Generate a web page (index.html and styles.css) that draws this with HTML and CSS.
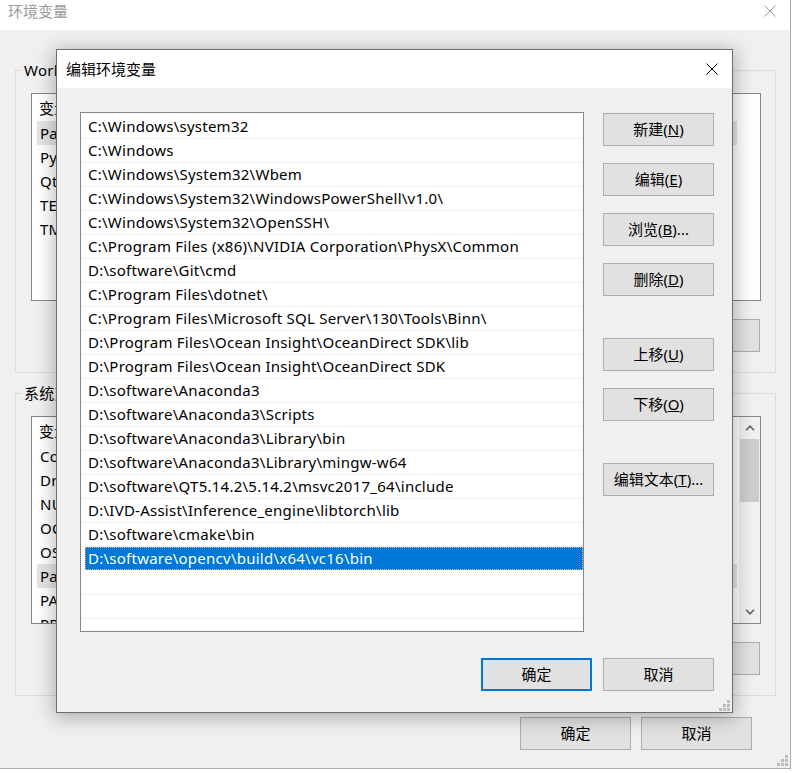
FILE: index.html
```html
<!DOCTYPE html>
<html lang="zh-CN">
<head>
<meta charset="utf-8">
<title>编辑环境变量</title>
<link rel="stylesheet" href="styles.css">
</head>
<body>
<div class="bgwin">
  <div class="bg-title">
    <span class="bg-title-text">环境变量</span>
    <svg class="bg-close" width="12" height="12" viewBox="0 0 12 12"><path d="M0.5 0.5L11.5 11.5M11.5 0.5L0.5 11.5" stroke="#9a9a9a" stroke-width="1" fill="none"/></svg>
  </div>
  <div class="bg-content">
    <fieldset class="group">
      <legend>WorkUser 的用户变量(U)</legend>
      <div class="gbody">
        <div class="bglist">
          <div class="bgl-main">
            <div class="bgl-head"><span class="c1">变量</span><span class="c2">值</span></div>
            <div class="bgl-row sel"><span class="c1">Path</span><span class="c2">C:\Users\WorkUser\AppData\Local\Microsoft\WindowsApps</span></div>
            <div class="bgl-row"><span class="c1">PyCharm Community Edition</span><span class="c2">D:\software\PyCharm\bin;</span></div>
            <div class="bgl-row"><span class="c1">QtMsBuild</span><span class="c2">C:\Users\WorkUser\AppData\Local\QtMsBuild</span></div>
            <div class="bgl-row"><span class="c1">TEMP</span><span class="c2">%USERPROFILE%\AppData\Local\Temp</span></div>
            <div class="bgl-row"><span class="c1">TMP</span><span class="c2">%USERPROFILE%\AppData\Local\Temp</span></div>
          </div>
        </div>
        <div class="grp-btns">
          <button class="wbtn">新建(<u>N</u>)...</button>
          <button class="wbtn">编辑(<u>E</u>)...</button>
          <button class="wbtn">删除(<u>D</u>)</button>
        </div>
      </div>
    </fieldset>
    <fieldset class="group g2">
      <legend>系统变量(<u>S</u>)</legend>
      <div class="gbody">
        <div class="bglist">
          <div class="bgl-main">
            <div class="bgl-head"><span class="c1">变量</span><span class="c2">值</span></div>
            <div class="bgl-row"><span class="c1">ComSpec</span><span class="c2">C:\Windows\system32\cmd.exe</span></div>
            <div class="bgl-row"><span class="c1">DriverData</span><span class="c2">C:\Windows\System32\Drivers\DriverData</span></div>
            <div class="bgl-row"><span class="c1">NUMBER_OF_PROCESSORS</span><span class="c2">12</span></div>
            <div class="bgl-row"><span class="c1">OCL_ICD_FILENAMES</span><span class="c2">intelocl64.dll</span></div>
            <div class="bgl-row"><span class="c1">OS</span><span class="c2">Windows_NT</span></div>
            <div class="bgl-row sel"><span class="c1">Path</span><span class="c2">C:\Windows\system32;C:\Windows;</span></div>
            <div class="bgl-row"><span class="c1">PATHEXT</span><span class="c2">.COM;.EXE;.BAT;.CMD;.VBS;.VBE;.JS</span></div>
            <div class="bgl-row"><span class="c1">PROCESSOR_ARCHITECTURE</span><span class="c2">AMD64</span></div>
          </div>
          <div class="vscroll">
            <svg class="arrow" width="10" height="6" viewBox="0 0 10 6"><path d="M1 5.2L5 1.2L9 5.2" stroke="#606060" stroke-width="1.6" fill="none"/></svg>
            <div class="thumb"></div>
            <div class="track"></div>
            <svg class="arrow" width="10" height="6" viewBox="0 0 10 6"><path d="M1 0.8L5 4.8L9 0.8" stroke="#606060" stroke-width="1.6" fill="none"/></svg>
          </div>
        </div>
        <div class="grp-btns">
          <button class="wbtn">新建(<u>W</u>)...</button>
          <button class="wbtn">编辑(<u>I</u>)...</button>
          <button class="wbtn">删除(<u>L</u>)</button>
        </div>
      </div>
    </fieldset>
    <div class="bg-foot">
      <button class="wbtn">确定</button>
      <button class="wbtn">取消</button>
    </div>
  </div>
  <svg class="grip" width="12" height="12" viewBox="0 0 12 12"><g fill="#bcbcbc"><rect x="8" y="0" width="3" height="3"/><rect x="4" y="4" width="3" height="3"/><rect x="8" y="4" width="3" height="3"/><rect x="0" y="8" width="3" height="3"/><rect x="4" y="8" width="3" height="3"/><rect x="8" y="8" width="3" height="3"/></g></svg>
</div>

<div class="dlg">
  <div class="dlg-title">
    <span class="dlg-title-text">编辑环境变量</span>
    <svg class="dlg-close" width="12" height="12" viewBox="0 0 12 12"><path d="M0.5 0.5L11.5 11.5M11.5 0.5L0.5 11.5" stroke="#000" stroke-width="1" fill="none"/></svg>
  </div>
  <div class="dlg-body">
    <div class="dlg-main">
      <div class="plist">
        <div class="prow"><div class="pcell">C:\Windows\system32</div></div>
        <div class="prow"><div class="pcell">C:\Windows</div></div>
        <div class="prow"><div class="pcell">C:\Windows\System32\Wbem</div></div>
        <div class="prow"><div class="pcell">C:\Windows\System32\WindowsPowerShell\v1.0\</div></div>
        <div class="prow"><div class="pcell">C:\Windows\System32\OpenSSH\</div></div>
        <div class="prow"><div class="pcell">C:\Program Files (x86)\NVIDIA Corporation\PhysX\Common</div></div>
        <div class="prow"><div class="pcell">D:\software\Git\cmd</div></div>
        <div class="prow"><div class="pcell">C:\Program Files\dotnet\</div></div>
        <div class="prow"><div class="pcell">C:\Program Files\Microsoft SQL Server\130\Tools\Binn\</div></div>
        <div class="prow"><div class="pcell">D:\Program Files\Ocean Insight\OceanDirect SDK\lib</div></div>
        <div class="prow"><div class="pcell">D:\Program Files\Ocean Insight\OceanDirect SDK</div></div>
        <div class="prow"><div class="pcell">D:\software\Anaconda3</div></div>
        <div class="prow"><div class="pcell">D:\software\Anaconda3\Scripts</div></div>
        <div class="prow"><div class="pcell">D:\software\Anaconda3\Library\bin</div></div>
        <div class="prow"><div class="pcell">D:\software\Anaconda3\Library\mingw-w64</div></div>
        <div class="prow"><div class="pcell">D:\software\QT5.14.2\5.14.2\msvc2017_64\include</div></div>
        <div class="prow"><div class="pcell">D:\IVD-Assist\Inference_engine\libtorch\lib</div></div>
        <div class="prow"><div class="pcell">D:\software\cmake\bin</div></div>
        <div class="prow sel"><div class="pcell">D:\software\opencv\build\x64\vc16\bin</div></div>
        <div class="prow"><div class="pcell"></div></div>
        <div class="prow"><div class="pcell"></div></div>
        <div class="prow"><div class="pcell"></div></div>
      </div>
      <div class="btncol">
        <button class="pbtn">新建(<u>N</u>)</button>
        <button class="pbtn">编辑(<u>E</u>)</button>
        <button class="pbtn">浏览(<u>B</u>)...</button>
        <button class="pbtn">删除(<u>D</u>)</button>
        <button class="pbtn sep">上移(<u>U</u>)</button>
        <button class="pbtn">下移(<u>O</u>)</button>
        <button class="pbtn sep">编辑文本(<u>T</u>)...</button>
      </div>
    </div>
    <div class="dlg-foot">
      <button class="pbtn default">确定</button>
      <button class="pbtn">取消</button>
    </div>
  </div>
  <svg class="grip" width="12" height="12" viewBox="0 0 12 12"><g fill="#bcbcbc"><rect x="8" y="0" width="3" height="3"/><rect x="4" y="4" width="3" height="3"/><rect x="8" y="4" width="3" height="3"/><rect x="0" y="8" width="3" height="3"/><rect x="4" y="8" width="3" height="3"/><rect x="8" y="8" width="3" height="3"/></g></svg>
</div>
</body>
</html>
```

FILE: styles.css
```css
* { box-sizing: border-box; }

body {
  margin: 0;
  background: #ffffff;
  font-family: "Noto Sans", "Noto Sans CJK SC", sans-serif;
  font-size: 15px;
  color: #000;
  position: relative;
  width: 793px;
  height: 773px;
  overflow: hidden;
}

button {
  font-family: "Noto Sans", "Noto Sans CJK SC", sans-serif;
  font-size: 15px;
  color: #000;
  padding: 0 0 2px 0;
  line-height: 20px;
}

/* ---------- background window ---------- */
.bgwin {
  position: relative;
  width: 791px;
  height: 769px;
  background: #f0f0f0;
  border-right: 1px solid #ababab;
  border-bottom: 1px solid #ababab;
  display: flex;
  flex-direction: column;
}

.bg-title {
  height: 30px;
  flex: none;
  background: #fff;
  display: flex;
  align-items: center;
  justify-content: space-between;
  padding: 0 14px 8px 8px;
}

.bg-title-text {
  color: #9a9a9a;
  font-size: 15px;
  line-height: 20px;
}

.bg-close { display: block; }

.bg-content {
  padding: 30px 14px 0 15px;
  display: flex;
  flex-direction: column;
}

.group {
  margin: 0;
  padding: 0;
  border: 1px solid #dcdcdc;
  min-width: 0;
}

.group legend {
  margin-left: 6px;
  padding: 0 2px;
  font-size: 15px;
  line-height: 20px;
  height: 20px;
  white-space: nowrap;
  letter-spacing: 0.25px;
}

.group.g2 { margin-top: 10px; }

.gbody {
  padding: 13px 14px 20px 15px;
}

.bglist {
  height: 208px;
  border: 1px solid #828790;
  background: #fff;
  display: flex;
  overflow: hidden;
}

.bgl-main {
  flex: 1;
  min-width: 0;
}

.bgl-head {
  height: 27px;
  display: flex;
  align-items: center;
  padding-left: 7px;
  line-height: 20px;
}

.bgl-head .c1 { width: 196px; }

.bgl-row {
  width: 700px;
  height: 24px;
  margin-left: 5px;
  padding-left: 3px;
  display: flex;
  align-items: center;
  line-height: 20px;
  white-space: nowrap;
  overflow: hidden;
  letter-spacing: 0.25px;
}

.bgl-row .c1 { width: 194px; overflow: hidden; flex: none; }

.bgl-row.sel { background: #e5e5e5; }

.vscroll {
  width: 21px;
  flex: none;
  background: #f0f0f0;
  display: flex;
  flex-direction: column;
  align-items: center;
}

.vscroll .arrow {
  display: block;
  margin: 8px 0;
}

.vscroll .thumb {
  width: 19px;
  height: 63px;
  background: #cdcdcd;
}

.vscroll .track { flex: 1; }

.grp-btns {
  display: flex;
  justify-content: flex-end;
  gap: 10px;
  margin-top: 18px;
  margin-right: 1px;
}

.wbtn {
  width: 111px;
  height: 33px;
  background: #e1e1e1;
  border: 1px solid #adadad;
}

.bg-foot {
  display: flex;
  justify-content: flex-end;
  gap: 10px;
  margin-top: 21px;
  padding-right: 24px;
}

.grip {
  position: absolute;
  right: 1px;
  bottom: 1px;
  display: block;
}

/* ---------- front dialog ---------- */
.dlg {
  position: absolute;
  left: 56px;
  top: 49px;
  width: 677px;
  height: 664px;
  border: 1px solid #6e6e6e;
  background: #f0f0f0;
  display: flex;
  flex-direction: column;
  box-shadow: 0 3px 18px 2px rgba(0, 0, 0, 0.28);
}

.dlg-title {
  height: 38px;
  flex: none;
  background: #fff;
  display: flex;
  align-items: center;
  justify-content: space-between;
  padding: 0 14px 0 9px;
}

.dlg-title-text {
  font-size: 15px;
  line-height: 20px;
}

.dlg-close { display: block; }

.dlg-body {
  flex: 1;
  display: flex;
  flex-direction: column;
  padding: 24px 18px 0 23px;
}

.dlg-main {
  display: flex;
  gap: 19px;
}

.plist {
  width: 504px;
  height: 520px;
  flex: none;
  border: 1px solid #828790;
  background: #fff;
  padding-top: 2px;
  overflow: hidden;
}

.prow {
  height: 24px;
  border-bottom: 1px solid #f0f0f0;
}

.pcell {
  margin-left: 4px;
  height: 23px;
  padding-left: 3px;
  line-height: 23px;
  white-space: nowrap;
  letter-spacing: 0.25px;
}

.prow.sel .pcell {
  background: #0078d7;
  color: #fff;
  outline: 1px dotted #f5b06a;
  outline-offset: -1px;
}

.btncol {
  display: flex;
  flex-direction: column;
  gap: 17px;
  margin-top: 1px;
}

.btncol .sep { margin-top: 25px; }

.pbtn {
  width: 111px;
  height: 33px;
  background: #e1e1e1;
  border: 1px solid #adadad;
}

.pbtn.default {
  border: 2px solid #0078d7;
}

.dlg-foot {
  display: flex;
  justify-content: flex-end;
  gap: 11px;
  margin-top: 26px;
}

.dlg .grip {
  right: 1px;
  bottom: 0;
}
```
